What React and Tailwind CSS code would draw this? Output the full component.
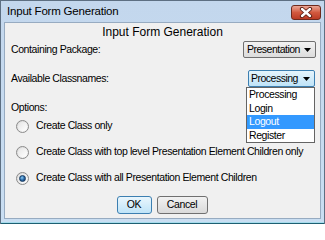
import { useState } from "react"

const Arrow = () => (
  <svg width="7" height="4" viewBox="0 0 7 4" className="shrink-0">
    <path d="M0 0 L7 0 L3.5 4 Z" fill="#000" />
  </svg>
)

const Radio = ({ checked }) => (
  <span className="relative flex h-[13px] w-[13px] shrink-0 items-center justify-center rounded-full border border-[#8b8b8b] bg-linear-to-br from-[#d8d8d8] to-[#fafafa]">
    <span className="h-[9px] w-[9px] rounded-full bg-linear-to-br from-[#e6e6e6] to-[#ffffff]" />
    {checked && (
      <span className="absolute h-[7px] w-[7px] rounded-full border border-[#173a60] bg-radial-[at_40%_35%] from-[#8fd0f7] via-[#2a6aaa] to-[#123660]" />
    )}
  </span>
)

const options = [
  "Create Class only",
  "Create Class with top level Presentation Element Children only",
  "Create Class with all Presentation Element Children",
]

const classnames = ["Processing", "Login", "Logout", "Register"]

export default function App() {
  const [selected, setSelected] = useState(2)

  return (
    <div className="flex h-[224px] w-[325px] flex-col overflow-hidden border-x border-t border-[#5d6f82] bg-linear-to-b from-[#c3d7ed] to-[#c9def2] font-['Liberation_Sans',Arial,sans-serif] text-black">
      {/* Title bar */}
      <div className="flex h-[21px] shrink-0 items-center justify-between pl-[6px] pr-[3px]">
        <span className="text-[11.5px] leading-none tracking-[-0.2px]">Input Form Generation</span>
        <button className="mt-[2px] flex h-[15px] w-[30px] items-center justify-center rounded-[3px] border border-[#6e2a1d] bg-linear-to-b from-[#e9a696] via-[#d2593f] to-[#bb3b24]">
          <svg width="14" height="11" viewBox="0 0 14 11">
            <path d="M3 2 L11 9 M11 2 L3 9" stroke="#5a1d12" strokeWidth="4.2" strokeLinecap="round" />
            <path d="M3 2 L11 9 M11 2 L3 9" stroke="#fff" strokeWidth="2.4" strokeLinecap="round" />
          </svg>
        </button>
      </div>

      {/* Dialog content */}
      <div className="mx-[3px] flex flex-1 flex-col border border-[#97abc1] bg-[#f0f0f0] text-[10.5px] tracking-[-0.4px]">
        <div className="h-[18px] text-center text-[12px] leading-[18px] tracking-normal">Input Form Generation</div>

        <div className="flex h-[17px] items-center justify-between pl-[6px] pr-[4px]">
          <span>Containing Package:</span>
          <div className="flex h-[17px] w-[73px] items-center justify-between rounded-[2px] border border-[#707070] bg-linear-to-b from-[#f2f2f2] to-[#dcdcdc] pl-[3px] pr-[4px] tracking-[-0.5px]">
            <span>Presentation</span>
            <Arrow />
          </div>
        </div>

        <div className="mt-[12px] flex h-[17px] items-center justify-between pl-[6px] pr-[5px]">
          <span>Available Classnames:</span>
          <div className="relative">
            <div className="flex h-[17px] w-[67px] items-center justify-between rounded-[2px] border border-[#3c7fb1] bg-linear-to-b from-[#e5f4fc] to-[#bfe3f7] pl-[2px] pr-[4px] tracking-[-0.5px]">
              <span>Processing</span>
              <Arrow />
            </div>
            <ul className="absolute right-0 top-full z-10 w-[69px] border border-[#646464] bg-white">
              {classnames.map((c) => (
                <li
                  key={c}
                  className={`h-[13.5px] pl-[2px] leading-[13.5px] ${c === "Logout" ? "bg-[#3399ff] text-white" : ""}`}
                >
                  {c}
                </li>
              ))}
            </ul>
          </div>
        </div>

        <div className="mt-[14px] h-[12px] pl-[6px] leading-[12px]">Options:</div>

        {options.map((o, i) => (
          <label
            key={o}
            className="flex h-[26px] cursor-default items-center gap-[7px] pl-[11px]"
            onClick={() => setSelected(i)}
          >
            <Radio checked={selected === i} />
            <span>{o}</span>
          </label>
        ))}

        <div className="mt-[5px] flex justify-center gap-[5px] pr-[1px]">
          <button className="h-[18px] w-[35px] rounded-[3px] border border-[#3c7fb1] bg-linear-to-b from-[#eaf6fd] to-[#bfe4f8] text-[10.5px]">
            OK
          </button>
          <button className="h-[18px] w-[51px] rounded-[3px] border border-[#707070] bg-linear-to-b from-[#f2f2f2] to-[#dadada] text-[10.5px]">
            Cancel
          </button>
        </div>
      </div>

      {/* Bottom frame */}
      <div className="h-[3px] shrink-0" />
      <div className="h-[1px] shrink-0 bg-[#a6dcec]" />
      <div className="h-[1px] shrink-0 bg-[#1d5f72]" />
    </div>
  )
}
